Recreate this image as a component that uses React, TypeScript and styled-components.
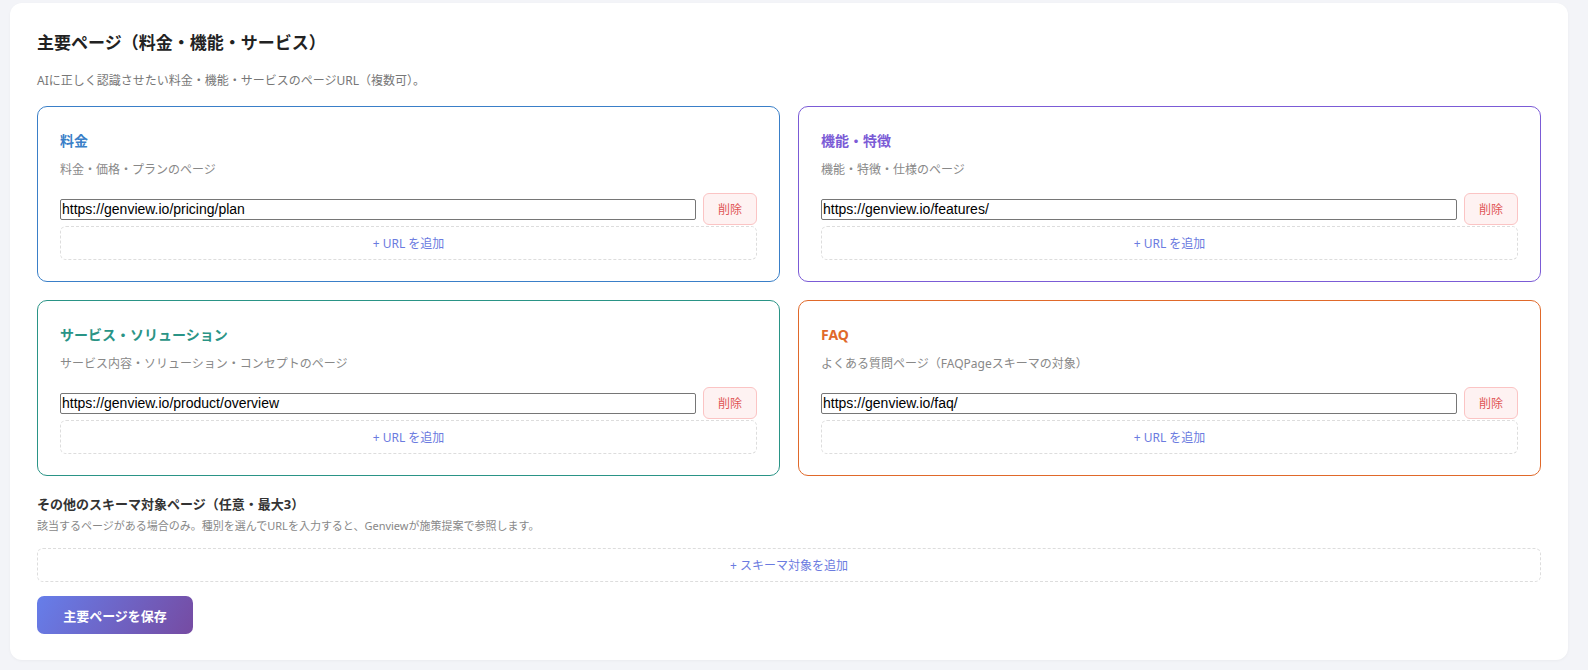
import styled, { createGlobalStyle } from "styled-components";

const Global = createGlobalStyle`
  body {
    margin: 0;
    background: #f3f4f8;
    font-family: "Noto Sans", "Noto Sans CJK JP", sans-serif;
  }
`;

const Panel = styled.div`
  background: #fff;
  margin: 3px 20px 10px 10px;
  border-radius: 12px;
  padding: 26px 27px 26px 27px;
  box-shadow: 0 1px 3px rgba(0, 0, 0, 0.04);
`;

const Title = styled.h2`
  margin: 0;
  font-size: 17px;
  font-weight: 700;
  color: #222;
  line-height: 28px;
`;

const Lead = styled.p`
  margin: 15px 0 0;
  font-size: 12px;
  color: #777;
  line-height: 18px;
`;

const Grid = styled.div`
  display: grid;
  grid-template-columns: 1fr 1fr;
  gap: 18px;
  margin-top: 16px;
`;

const Card = styled.div<{ $c: string }>`
  border: 1px solid ${(p) => p.$c};
  border-radius: 10px;
  padding: 23px 22px 21px;
`;

const CardTitle = styled.div<{ $c: string }>`
  font-size: 14px;
  font-weight: 700;
  color: ${(p) => p.$c};
  line-height: 22px;
`;

const CardDesc = styled.div`
  font-size: 12px;
  color: #888;
  margin-top: 9px;
  line-height: 18px;
`;

const Row = styled.div`
  display: flex;
  align-items: center;
  gap: 7px;
  margin-top: 14px;
`;

const UrlInput = styled.input`
  flex: 1;
  font-family: "Liberation Sans", Arial, sans-serif;
  font-size: 14px;
  height: 19px;
  padding: 0 1px;
  border: 1px solid #767676;
  border-radius: 2px;
  color: #000;
`;

const DelButton = styled.button`
  width: 54px;
  height: 32px;
  border: 1px solid #fbc4c4;
  background: #fef2f2;
  color: #e05555;
  border-radius: 6px;
  font-family: inherit;
  font-size: 12px;
`;

const AddBox = styled.button<{ $mt?: number }>`
  display: block;
  width: 100%;
  height: 34px;
  margin-top: ${(p) => p.$mt ?? 1}px;
  border: 1px dashed #ddd;
  background: #fff;
  border-radius: 6px;
  color: #6b7be0;
  font-family: inherit;
  font-size: 12px;
`;

const SubTitle = styled.h3`
  margin: 18px 0 0;
  font-size: 13px;
  font-weight: 700;
  color: #333;
  line-height: 20px;
`;

const SubDesc = styled.p`
  margin: 4px 0 0;
  font-size: 11px;
  color: #888;
  line-height: 16px;
`;

const SaveButton = styled.button`
  margin-top: 14px;
  width: 156px;
  height: 38px;
  border: 0;
  border-radius: 7px;
  background: linear-gradient(120deg, #667eea 0%, #764ba2 100%);
  color: #fff;
  font-family: inherit;
  font-size: 13px;
  font-weight: 700;
`;

const cards = [
  { t: "料金", d: "料金・価格・プランのページ", u: "https://genview.io/pricing/plan", c: "#3a7fc8" },
  { t: "機能・特徴", d: "機能・特徴・仕様のページ", u: "https://genview.io/features/", c: "#7b5bd6" },
  { t: "サービス・ソリューション", d: "サービス内容・ソリューション・コンセプトのページ", u: "https://genview.io/product/overview", c: "#2a9486" },
  { t: "FAQ", d: "よくある質問ページ（FAQPageスキーマの対象）", u: "https://genview.io/faq/", c: "#e0692a" },
];

export default function App() {
  return (
    <>
      <Global />
      <Panel>
        <Title>主要ページ（料金・機能・サービス）</Title>
        <Lead>AIに正しく認識させたい料金・機能・サービスのページURL（複数可）。</Lead>
        <Grid>
          {cards.map((c) => (
            <Card key={c.t} $c={c.c}>
              <CardTitle $c={c.c}>{c.t}</CardTitle>
              <CardDesc>{c.d}</CardDesc>
              <Row>
                <UrlInput defaultValue={c.u} />
                <DelButton>削除</DelButton>
              </Row>
              <AddBox>+ URL を追加</AddBox>
            </Card>
          ))}
        </Grid>
        <SubTitle>その他のスキーマ対象ページ（任意・最大3）</SubTitle>
        <SubDesc>該当するページがある場合のみ。種別を選んでURLを入力すると、Genviewが施策提案で参照します。</SubDesc>
        <AddBox $mt={14}>+ スキーマ対象を追加</AddBox>
        <SaveButton>主要ページを保存</SaveButton>
      </Panel>
    </>
  );
}
